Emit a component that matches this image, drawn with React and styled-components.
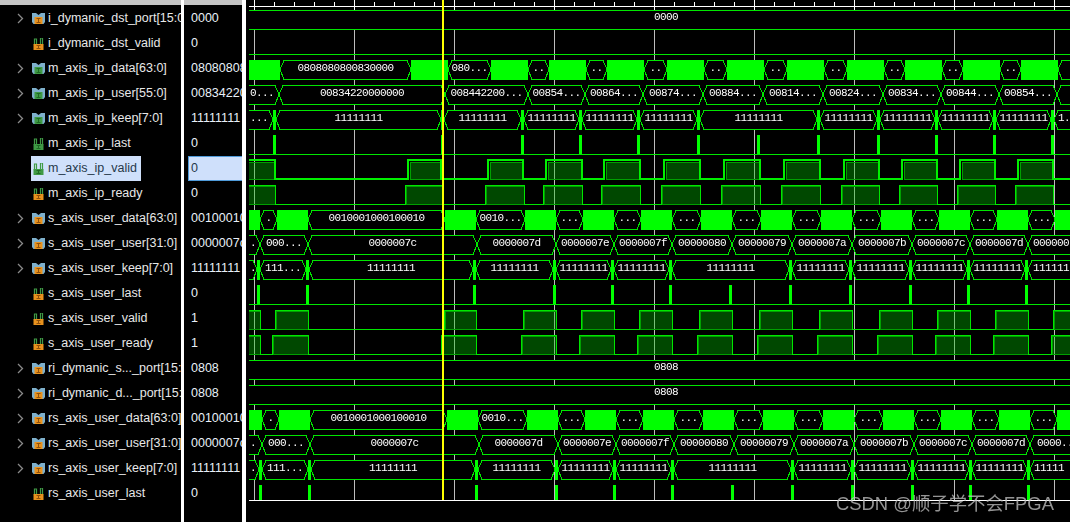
import React from 'react';
import styled, { createGlobalStyle } from 'styled-components';

const Global = createGlobalStyle`
  html, body { margin: 0; padding: 0; background: #000; }
  body { width: 1070px; height: 522px; overflow: hidden; }
`;

const Page = styled.div`
  position: relative;
  display: flex;
  width: 1070px;
  height: 522px;
  background: #000;
  overflow: hidden;
`;
const Column = styled.div`
  width: ${p => p.$w}px;
  flex: none;
  display: flex;
  flex-direction: column;
  overflow: hidden;
  padding-top: 1px;
  box-sizing: border-box;
  border-top: 5px solid #c4c4c4;
  background: #000;
`;
const Divider = styled.div`
  width: ${p => p.$w}px;
  flex: none;
  background: #fff;
`;
const NameRow = styled.div`
  height: 25px;
  flex: none;
  display: flex;
  align-items: center;
  padding-left: 17px;
  white-space: nowrap;
  font: 12.5px "Liberation Sans", Arial, sans-serif;
  color: #e8e8e8;
`;
const Chevron = styled.span`
  width: 14px;
  flex: none;
  display: flex;
  align-items: center;
  svg { display: block; }
`;
const NameLabel = styled.span`
  padding: 0 ${p => (p.$sel ? 4 : 3)}px 2px 1px;
  height: 25px;
  box-sizing: border-box;
  display: flex;
  align-items: center;
  gap: 3px;
  background: ${p => (p.$sel ? '#cfe0fb' : 'transparent')};
  color: ${p => (p.$sel ? '#26384a' : 'inherit')};
  svg { margin-top: 2px; flex: none; }
`;
const ValueRow = styled.div`
  height: 25px;
  flex: none;
  box-sizing: border-box;
  display: flex;
  align-items: center;
  padding: 0 0 2px 7px;
  white-space: nowrap;
  overflow: hidden;
  font: 12.5px "Liberation Sans", Arial, sans-serif;
  color: #e8f0f8;
`;
const SelValue = styled(ValueRow)`
  margin-left: 4px;
  padding: 0 0 1px 2px;
  background: #cfe0fb;
  border: 1px solid #4f9ad8;
  border-right: none;
  color: #26384a;
`;
const WaveSvg = styled.svg`
  display: block;
  flex: none;
  will-change: transform;
`;
const WaveText = styled.text`
  font: 11px "Liberation Mono", "DejaVu Sans Mono", monospace;
  letter-spacing: -0.6px;
  fill: #fff;
`;
const Watermark = styled.div`
  position: absolute;
  left: 836px;
  top: 489px;
  font: 18.4px "Liberation Sans", "Noto Sans CJK SC", sans-serif;
  color: rgba(190, 190, 190, 0.78);
  white-space: nowrap;
`;

const L = 249, R = 1070, G = '#00e600', B = '#00ff00';
const top = i => 10 + 25 * i;

function BusIcon({ c, d }) {
  return (
    <svg width="13" height="12" viewBox="0 0 13 12">
      <path d="M0 0h4l2.500 2 2.500-2h4v9l-1.500 2h-10L0 9z" fill="#7eb0cc" />
      <rect x="2.500" y="4" width="8" height="7" fill={c} />
      <path d="M4.500 5.500h4M6.500 5.500v4M4.500 9.500h4" stroke={d} fill="none" />
    </svg>
  );
}
function WireIcon({ c, d }) {
  return (
    <svg width="13" height="12" viewBox="0 0 13 12">
      <path d="M2.500 7V1h2v6M10.500 7V0h-2v7" stroke="#3f9a45" strokeWidth="1.200" fill="none" />
      <rect x="1.500" y="6" width="10" height="6" fill={c} />
      <path d="M4.500 7.500h4M6.500 7.500v3M4.500 10.500h4" stroke={d} fill="none" />
    </svg>
  );
}
const ORANGE = ['#e8921e', '#90500a'];
const GREEN = ['#3f9a45', '#1f6a25'];

const signals = [
  ['i_dymanic_dst_port[15:0]', '0000', 1, ORANGE],
  ['i_dymanic_dst_valid', '0', 0, ORANGE],
  ['m_axis_ip_data[63:0]', '08080808', 1, GREEN],
  ['m_axis_ip_user[55:0]', '00834220', 1, GREEN],
  ['m_axis_ip_keep[7:0]', '11111111', 1, GREEN],
  ['m_axis_ip_last', '0', 0, GREEN],
  ['m_axis_ip_valid', '0', 0, GREEN],
  ['m_axis_ip_ready', '0', 0, ORANGE],
  ['s_axis_user_data[63:0]', '00100010', 1, ORANGE],
  ['s_axis_user_user[31:0]', '0000007c', 1, ORANGE],
  ['s_axis_user_keep[7:0]', '11111111', 1, ORANGE],
  ['s_axis_user_last', '0', 0, ORANGE],
  ['s_axis_user_valid', '1', 0, ORANGE],
  ['s_axis_user_ready', '1', 0, ORANGE],
  ['ri_dymanic_s..._port[15:0]', '0808', 1, ORANGE],
  ['ri_dymanic_d..._port[15:0]', '0808', 1, ORANGE],
  ['rs_axis_user_data[63:0]', '00100010', 1, ORANGE],
  ['rs_axis_user_user[31:0]', '0000007c', 1, ORANGE],
  ['rs_axis_user_keep[7:0]', '11111111', 1, ORANGE],
  ['rs_axis_user_last', '0', 0, ORANGE],
];

/* ---- waveform data: [from, to, text] ---- */
const mData = { blocks: [[249,280],[411,448],[491,528],[549,586],[607,644],[667,704],[727,764],[787,824],[847,884],[905,942],[963,1000],[1021,1058]],
  segs: [[280,411,'0808080800830000'],[448,491,'080...'],[528,549,'..'],[586,607,'..'],[644,667,'..'],[704,727,'..'],[764,787,'..'],[824,847,'..'],[884,905,'..'],[942,963,'..'],[1000,1021,'..'],[1058,1082,'']] };
const mUser = { blocks: [], segs: [[240,279,'0...',250],[279,445,'00834220000000'],[445,528,'008442200...'],[528,585,'00854...'],[585,643,'00864...'],[643,703,'00874...'],[703,763,'00884...'],[763,823,'00814...'],[823,883,'00824...'],[883,941,'00834...'],[941,999,'00844...'],[999,1057,'00854...'],[1057,1082,'']] };
const mKeepG = [273,441,521,579,637,697,817,877,935,993,1051];
const mKeep = { blocks: mKeepG.map(x => [x, x + 3]), segs: [[240,273,'...',250],[276,441,'11111111'],[444,521,'11111111'],[524,579,'11111111'],[582,637,'11111111'],[640,697,'11111111'],[700,817,'11111111'],[820,877,'11111111'],[880,935,'11111111'],[938,993,'11111111'],[996,1051,'11111111'],[1054,1090,'1.',1058]] };
const mLast = [273,441,521,579,637,697,757,817,877,935,993,1051];
const mValid = [[240,275],[408,441],[488,523],[546,582],[604,640],[664,700],[724,760],[784,820],[844,879],[902,937],[960,995],[1018,1053]];
const mReady = [[240,275],[405,442],[485,524],[543,582],[601,640],[661,700],[721,760],[781,820],[841,879],[899,937],[957,995],[1015,1053]];

const sData = { blocks: [[249,260],[277,308],[445,476],[525,556],[583,614],[641,672],[701,732],[761,792],[821,852],[881,912],[939,970],[997,1028],[1055,1070]],
  segs: [[260,277,'.'],[308,445,'0010001000100010'],[476,525,'0010...'],[556,583,'...'],[614,641,'...'],[672,701,'...'],[732,761,'...'],[792,821,'...'],[852,881,'...'],[912,939,'...'],[970,997,'...'],[1028,1055,'...']] };
const sUser = { blocks: [], segs: [[240,260,'.',250],[260,308,'000...'],[308,477,'0000007c'],[477,556,'0000007d'],[556,614,'0000007e'],[614,672,'0000007f'],[672,732,'00000080'],[732,792,'00000079'],[792,852,'0000007a'],[852,912,'0000007b'],[912,970,'0000007c'],[970,1028,'0000007d'],[1028,1100,'000000',1033]] };
const sKeepG = [257,306,473,553,611,669,789,849,909,967,1025];
const sKeep = { blocks: sKeepG.map(x => [x, x + 3]), segs: [[240,257,'.',250],[260,306,'111...'],[309,473,'11111111'],[476,553,'11111111'],[556,611,'11111111'],[614,669,'11111111'],[672,789,'11111111'],[792,849,'11111111'],[852,909,'11111111'],[912,967,'11111111'],[970,1025,'11111111'],[1028,1100,'111111',1033]] };
const sLast = [257,306,473,553,611,669,729,789,849,909,967,1025];
const sValid = [[240,260],[275,308],[444,476],[523,556],[581,614],[639,672],[699,732],[759,792],[819,852],[879,912],[937,970],[995,1028],[1053,1090]];
const sReady = [[240,260],[272,308],[441,476],[521,556],[579,614],[637,672],[697,732],[757,792],[817,852],[877,912],[935,970],[993,1028],[1051,1090]];

const shift = (b, n) => ({
  blocks: b.blocks.map(([x, y]) => [x === 249 ? 249 : x + n, y === 1070 ? 1070 : y + n]),
  segs: b.segs.map(([a, c, t, s]) => [a < 249 ? a : a + n, c + n, t, s]),
});
const rsUser = shift(sUser, 2); rsUser.segs[12][2] = '0000..'; rsUser.segs[12][3] = 1037;
const rsKeep = shift(sKeep, 2); rsKeep.segs[11][2] = '11111'; rsKeep.segs[11][3] = 1034;

function Flat({ i, v }) {
  const t = top(i);
  return (
    <g>
      <rect x={L} y={t} width={R - L} height={19} fill="#000" />
      <path d={`M${L} ${t + .5}H${R}M${L} ${t + 19.5}H${R}`} stroke={G} fill="none" />
      <WaveText x={666} y={t + 10} textAnchor="middle">{v}</WaveText>
    </g>
  );
}
function Bus({ i, data }) {
  const t = top(i), b = t + 19, m = t + 9.5;
  return (
    <g>
      <g shapeRendering="crispEdges">
        {data.segs.map(([a, c], k) => (
          <path key={k} d={`M${a} ${m}L${a + 4} ${t + .5}H${c - 4}L${c} ${m}L${c - 4} ${b + .5}H${a + 4}Z`} fill="#000" stroke={G} />
        ))}
        {data.blocks.map(([a, c], k) => <rect key={k} x={a} y={t} width={c - a} height={20} fill={B} />)}
      </g>
      {data.segs.map(([a, c, s, start], k) => s ? (
        start !== undefined
          ? <WaveText key={k} x={start} y={t + 11}>{s}</WaveText>
          : <WaveText key={k} x={(a + c) / 2} y={t + 11} textAnchor="middle">{s}</WaveText>
      ) : null)}
    </g>
  );
}
function Pulses({ i, xs, lowColor = G, h = 19 }) {
  const t = top(i);
  return (
    <g shapeRendering="crispEdges">
      <rect x={L} y={t + h} width={R - L} height={1} fill={lowColor} />
      {xs.map((x, k) => <rect key={k} x={x} y={t} width={3} height={h} fill={B} />)}
    </g>
  );
}
function Logic({ i, highs, sw = 1 }) {
  const t = top(i), b = t + 19;
  const off = sw === 2 ? 0 : .5;
  let d = `M${L - 5} ${b + off}`;
  highs.forEach(([a, c]) => { d += `H${a}V${t + off}H${c}V${b + off}`; });
  d += `H${R + 5}`;
  return (
    <g shapeRendering="crispEdges">
      {highs.map(([a, c], k) => (
        <rect key={k} x={a + sw} y={t + sw} width={c - a - sw} height={19 - sw} fill="rgba(0,200,0,.36)" stroke="#00a000" strokeWidth="1" />
      ))}
      <path d={d} fill="none" stroke={sw === 2 ? '#00f000' : G} strokeWidth={sw} />
    </g>
  );
}

const majors = []; for (let x = 254; x < R; x += 100) majors.push(x);
const minors = []; for (let x = 254; x < R; x += 20) if ((x - 254) % 100) minors.push(x);

function Waves() {
  return (
    <WaveSvg width={824} height={522} viewBox="246 0 824 522">
      <defs><clipPath id="wave-clip"><rect x={L} y={0} width={R - L} height={501} /></clipPath></defs>
      <g clipPath="url(#wave-clip)">
        <g shapeRendering="crispEdges">
          {majors.map(x => <rect key={x} x={x} y={10} width={1} height={490} fill="#bdbdbd" />)}
          <rect x={L} y={6} width={R - L} height={1} fill="#fff" />
          {majors.map(x => <rect key={x} x={x} y={0} width={1} height={10} fill="#fff" />)}
          {minors.map(x => <rect key={x} x={x} y={2} width={1} height={4} fill="#fff" />)}
        </g>
        <Flat i={0} v="0000" />
        <Pulses i={1} xs={[]} />
        <Bus i={2} data={mData} />
        <Bus i={3} data={mUser} />
        <Bus i={4} data={mKeep} />
        <Pulses i={5} xs={mLast} />
        <Logic i={6} highs={mValid} sw={2} />
        <Logic i={7} highs={mReady} />
        <Bus i={8} data={sData} />
        <Bus i={9} data={sUser} />
        <Bus i={10} data={sKeep} />
        <Pulses i={11} xs={sLast} />
        <Logic i={12} highs={sValid} />
        <Logic i={13} highs={sReady} />
        <Flat i={14} v="0808" />
        <Flat i={15} v="0808" />
        <Bus i={16} data={shift(sData, 2)} />
        <Bus i={17} data={rsUser} />
        <Bus i={18} data={rsKeep} />
        <Pulses i={19} xs={sLast.map(x => x + 2)} h={15} lowColor="#fff" />
        <rect x={442} y={0} width={2} height={500} fill="#ffff00" shapeRendering="crispEdges" />
      </g>
    </WaveSvg>
  );
}

export default function App() {
  return (
    <Page>
      <Global />
      <Column $w={181}>
        {signals.map(([name, , bus, [c, d]], i) => (
          <NameRow key={name}>
            <Chevron>
              {bus ? (
                <svg width="7" height="11" viewBox="0 0 7 11"><path d="M1 1l4.500 4.500L1 10" stroke="#8a8a8a" strokeWidth="1.300" fill="none" /></svg>
              ) : null}
            </Chevron>
            <NameLabel $sel={i === 6}>
              {bus ? <BusIcon c={c} d={d} /> : <WireIcon c={c} d={d} />}
              {name}
            </NameLabel>
          </NameRow>
        ))}
      </Column>
      <Divider $w={3} />
      <Column $w={58}>
        {signals.map(([name, v], i) => i === 6
          ? <SelValue key={name}>{v}</SelValue>
          : <ValueRow key={name}>{v}</ValueRow>)}
      </Column>
      <Divider $w={4} />
      <Waves />
      <Watermark>CSDN @顺子学不会FPGA</Watermark>
    </Page>
  );
}
